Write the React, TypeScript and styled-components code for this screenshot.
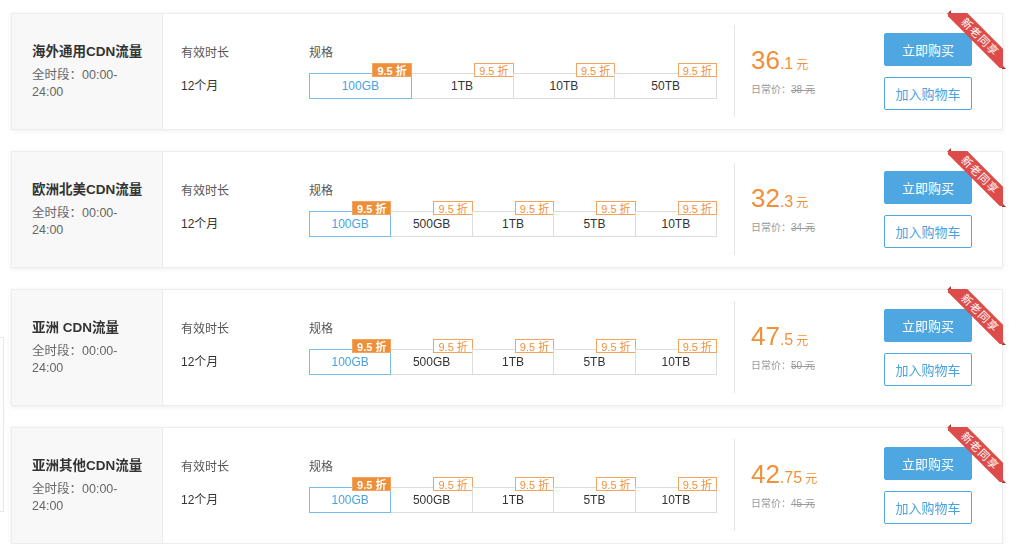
import React from "react";
import styled, { createGlobalStyle } from "styled-components";

const GlobalStyle = createGlobalStyle`
  body {
    margin: 0;
    background: #fff;
    font-family: "Liberation Sans", "Noto Sans CJK SC", sans-serif;
    color: #333;
  }
`;

const Page = styled.div`
  display: flex;
  flex-direction: column;
  gap: 21px;
  padding: 13px 21px 0 11px;
`;

const SidePanel = styled.div`
  position: fixed;
  left: -120px;
  top: 337px;
  width: 122px;
  height: 173px;
  border: 1px solid #e3e7ef;
  background: #fff;
`;

const Card = styled.div`
  position: relative;
  display: flex;
  height: 117px;
  box-sizing: border-box;
  border: 1px solid #ededed;
  box-shadow: 0 1px 5px rgba(0, 0, 0, 0.07);
  background: #fff;
`;

const NamePanel = styled.div`
  width: 151px;
  box-sizing: border-box;
  padding: 0 24px 0 20px;
  background: #f8f8f8;
  border-right: 1px solid #ececec;
  display: flex;
  flex-direction: column;
  justify-content: center;
`;

const Title = styled.div`
  font-size: 13.5px;
  font-weight: bold;
  line-height: 18px;
  margin-bottom: 6px;
  color: #333;
  white-space: nowrap;
`;

const Sub = styled.div`
  font-size: 12.5px;
  line-height: 17px;
  color: #666;
`;

const Column = styled.div<{ $w: number }>`
  width: ${(p) => p.$w}px;
  padding-top: 30px;
  box-sizing: border-box;
`;

const Label = styled.div`
  font-size: 12px;
  line-height: 18px;
  color: #555;
`;

const Value = styled.div`
  margin-top: 15px;
  font-size: 12px;
  line-height: 18px;
  color: #333;
`;

const SpecRow = styled.div`
  display: flex;
  margin-top: 11px;
  padding-left: 1px;
`;

const SpecItem = styled.div<{ $active?: boolean }>`
  position: relative;
  flex: 1;
  height: 26px;
  box-sizing: border-box;
  margin-left: -1px;
  border: 1px solid ${(p) => (p.$active ? "#79bbe9" : "#dcdcdc")};
  z-index: ${(p) => (p.$active ? 1 : 0)};
  display: flex;
  align-items: center;
  justify-content: center;
  font-size: 12px;
  color: ${(p) => (p.$active ? "#4aa3df" : "#333")};
`;

const Tag = styled.span<{ $active?: boolean }>`
  position: absolute;
  top: -11px;
  right: -1px;
  height: 14px;
  padding: 0 4px;
  box-sizing: border-box;
  display: flex;
  align-items: center;
  font-size: 11px;
  font-weight: ${(p) => (p.$active ? "bold" : "normal")};
  white-space: nowrap;
  color: ${(p) => (p.$active ? "#fff" : "#f0913b")};
  background: ${(p) => (p.$active ? "#ee8f3a" : "#fff")};
  border: 1px solid #f2a461;
`;

const Divider = styled.div`
  width: 1px;
  margin: 11px 0 12px 17px;
  background: #e6e6e6;
`;

const PriceBox = styled.div`
  flex: 1;
  padding-left: 16px;
  display: flex;
  flex-direction: column;
  justify-content: center;
`;

const Price = styled.div`
  line-height: 28px;
  color: #f0913a;
  white-space: nowrap;
`;

const Int = styled.span`
  font-size: 26px;
`;

const Frac = styled.span`
  font-size: 16px;
`;

const Unit = styled.span`
  font-size: 12px;
  margin-left: 3px;
`;

const Orig = styled.div`
  margin-top: 4px;
  font-size: 10px;
  line-height: 14px;
  color: #999;
  s {
    text-decoration: line-through;
  }
`;

const Actions = styled.div`
  display: flex;
  flex-direction: column;
  justify-content: center;
  gap: 11px;
  margin-right: 30px;
`;

const Button = styled.button<{ $ghost?: boolean }>`
  width: 88px;
  height: 33px;
  border-radius: 2px;
  font-family: inherit;
  font-size: 13px;
  cursor: pointer;
  border: 1px solid #4ea7e0;
  background: ${(p) => (p.$ghost ? "#fff" : "#4ea7e0")};
  color: ${(p) => (p.$ghost ? "#4aa3df" : "#fff")};
`;

const RibbonClip = styled.div`
  position: absolute;
  top: -1px;
  right: -1px;
  width: 55px;
  height: 55px;
  overflow: hidden;
  z-index: 2;
`;

const Ribbon = styled.div`
  position: absolute;
  left: -8px;
  top: 16px;
  width: 80px;
  height: 16px;
  line-height: 16px;
  background: #dc4c4a;
  color: #fff;
  font-size: 11px;
  text-align: center;
  transform: rotate(45deg);
  letter-spacing: 1px;
`;

const Fold = styled.span<{ $corner: "top" | "right" }>`
  position: absolute;
  width: 0;
  height: 0;
  ${(p) =>
    p.$corner === "top"
      ? `top: -4px; right: 51px; border-left: 4px solid transparent; border-bottom: 4px solid #a83432;`
      : `top: 51px; right: -4px; border-top: 4px solid transparent; border-left: 4px solid #a83432;`}
`;

type Product = {
  name: string;
  specs: string[];
  int: string;
  frac: string;
  orig: string;
};

const products: Product[] = [
  { name: "海外通用CDN流量", specs: ["100GB", "1TB", "10TB", "50TB"], int: "36", frac: ".1", orig: "38" },
  { name: "欧洲北美CDN流量", specs: ["100GB", "500GB", "1TB", "5TB", "10TB"], int: "32", frac: ".3", orig: "34" },
  { name: "亚洲 CDN流量", specs: ["100GB", "500GB", "1TB", "5TB", "10TB"], int: "47", frac: ".5", orig: "50" },
  { name: "亚洲其他CDN流量", specs: ["100GB", "500GB", "1TB", "5TB", "10TB"], int: "42", frac: ".75", orig: "45" },
];

const ProductCard: React.FC<{ p: Product }> = ({ p }) => (
  <Card>
    <NamePanel>
      <Title>{p.name}</Title>
      <Sub>全时段：00:00-24:00</Sub>
    </NamePanel>
    <Column $w={146} style={{ paddingLeft: 18 }}>
      <Label>有效时长</Label>
      <Value>12个月</Value>
    </Column>
    <Column $w={408}>
      <Label>规格</Label>
      <SpecRow>
        {p.specs.map((s, i) => (
          <SpecItem key={s} $active={i === 0}>
            {s}
            <Tag $active={i === 0}>9.5 折</Tag>
          </SpecItem>
        ))}
      </SpecRow>
    </Column>
    <Divider />
    <PriceBox>
      <Price>
        <Int>{p.int}</Int>
        <Frac>{p.frac}</Frac>
        <Unit>元</Unit>
      </Price>
      <Orig>
        日常价：<s>{p.orig} 元</s>
      </Orig>
    </PriceBox>
    <Actions>
      <Button>立即购买</Button>
      <Button $ghost>加入购物车</Button>
    </Actions>
    <Fold $corner="top" />
    <Fold $corner="right" />
    <RibbonClip>
      <Ribbon>新老同享</Ribbon>
    </RibbonClip>
  </Card>
);

export default function App() {
  return (
    <>
      <GlobalStyle />
      <SidePanel />
      <Page>
        {products.map((p) => (
          <ProductCard key={p.name} p={p} />
        ))}
      </Page>
    </>
  );
}
